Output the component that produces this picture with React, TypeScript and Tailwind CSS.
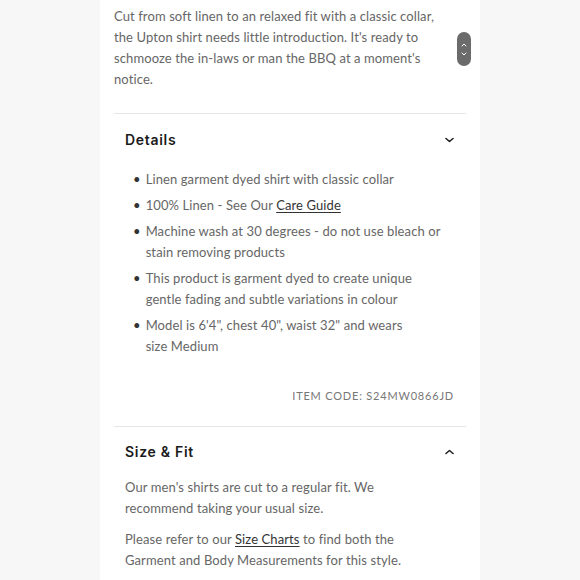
import { useState } from 'react';

const body = "font-['Lato','Open_Sans',sans-serif]";
const head = "font-['Inter','Roboto',sans-serif]";

const details = [
  <>Linen garment dyed shirt with classic collar</>,
  <>
    100% Linen - See Our <a className="underline underline-offset-2 text-[#333]">Care Guide</a>
  </>,
  <>Machine wash at 30 degrees - do not use bleach or stain removing products</>,
  <>This product is garment dyed to create unique gentle fading and subtle variations in colour</>,
  <>
    Model is 6'4", chest 40", waist 32" and wears
    <br />
    size Medium
  </>,
];

function Chevron({ up }: { up?: boolean }) {
  return (
    <svg width="9" height="6" viewBox="0 0 9 6" fill="none" className={up ? 'rotate-180' : ''}>
      <path d="M1 1.5l3.5 3 3.5-3" stroke="#222" strokeWidth="1.6" strokeLinecap="round" strokeLinejoin="round" />
    </svg>
  );
}

export default function App() {
  const [openDetails, setOpenDetails] = useState(true);
  const [openSize, setOpenSize] = useState(true);

  return (
    <div className="min-h-screen w-full bg-[#f7f7f7] flex justify-center">
      <div className={`relative w-[380px] bg-white px-[14px] pt-[6px] text-[#666] ${body}`}>
        {/* description */}
        <p className="text-[13px] leading-[21px] tracking-[0.1px] pr-[16px]">
          Cut from soft linen to an relaxed fit with a classic collar, the Upton shirt needs little introduction. It's ready to schmooze the in-laws or man the BBQ at a moment's notice.
        </p>

        {/* scroll pill */}
        <div className="absolute left-[357px] top-[32px] w-[14px] h-[34px] rounded-full bg-[#6b6b6b] flex flex-col items-center justify-center gap-[5px]">
          <svg width="6" height="4" viewBox="0 0 6 4" fill="none">
            <path d="M1 3l2-2 2 2" stroke="#fff" strokeWidth="1" strokeLinecap="round" />
          </svg>
          <svg width="6" height="4" viewBox="0 0 6 4" fill="none">
            <path d="M1 1l2 2 2-2" stroke="#fff" strokeWidth="1" strokeLinecap="round" />
          </svg>
        </div>

        {/* Details */}
        <div className="mt-[23px] border-t border-[#e6e6e6]">
          <button
            onClick={() => setOpenDetails(!openDetails)}
            className="w-full flex items-center justify-between pl-[11px] pr-[12px] py-[16px]"
          >
            <span className={`${head} text-[14px] leading-[20px] font-semibold tracking-[0.7px] text-[#1a1a1a]`}>Details</span>
            <Chevron />
          </button>
          {openDetails && (
            <div className="pt-[3px] pb-[22px]">
              <ul className="pl-[19px] pr-[24px]">
                {details.map((d, i) => (
                  <li key={i} className="flex gap-[5px] mb-[5px] text-[13px] leading-[21px] tracking-[0.1px]">
                    <span className="text-[#333]">•</span>
                    <span>{d}</span>
                  </li>
                ))}
              </ul>
              <div className="mt-[31px] pr-[12px] text-right text-[11px] leading-[16px] tracking-[0.8px] text-[#777]">
                ITEM CODE: S24MW0866JD
              </div>
            </div>
          )}
        </div>

        {/* Size & Fit */}
        <div className="border-t border-[#e6e6e6]">
          <button
            onClick={() => setOpenSize(!openSize)}
            className="w-full flex items-center justify-between pl-[11px] pr-[12px] py-[15px]"
          >
            <span className={`${head} text-[14px] leading-[20px] font-semibold tracking-[0.7px] text-[#1a1a1a]`}>Size &amp; Fit</span>
            <Chevron up />
          </button>
          {openSize && (
            <div className="pl-[11px] pr-[26px] pb-[20px] text-[13px] leading-[21px] tracking-[0.1px]">
              <p>Our men's shirts are cut to a regular fit. We recommend taking your usual size.</p>
              <p className="mt-[10px]">
                Please refer to our <a className="underline underline-offset-2 text-[#333]">Size Charts</a> to find both the Garment and Body Measurements for this style.
              </p>
            </div>
          )}
        </div>
      </div>
    </div>
  );
}
